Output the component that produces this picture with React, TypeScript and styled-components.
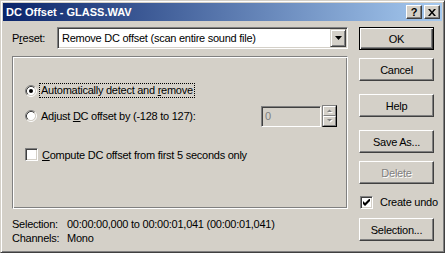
import styled, { createGlobalStyle } from "styled-components";

const FACE = "#d4d0c8";
const SHADOW = "#808080";
const DARK = "#404040";

const GlobalStyle = createGlobalStyle`
  html, body {
    margin: 0;
    padding: 0;
    background: ${FACE};
  }
  body {
    font-family: "Liberation Sans", Arial, sans-serif;
    font-size: 11px;
    letter-spacing: -0.25px;
    color: #000;
  }
`;

function CloseGlyph() {
  return (
    <svg width="8" height="7" viewBox="0 0 8 7">
      <path d="M0 0h2l2 2.5L6 0h2L5 3.5 8 7H6L4 4.5 2 7H0l3-3.5z" fill="#000" />
    </svg>
  );
}

function Radio({ checked }: { checked?: boolean }) {
  return (
    <RadioBox>
      <svg width="12" height="12" viewBox="0 0 12 12">
        <circle cx="6" cy="6" r="4.2" fill="#fff" />
        <path d="M2.11 9.89A5.5 5.5 0 0 1 9.89 2.11" stroke={SHADOW} fill="none" />
        <path d="M9.89 2.11A5.5 5.5 0 0 1 2.11 9.89" stroke="#fff" fill="none" />
        <path d="M2.82 9.18A4.5 4.5 0 0 1 9.18 2.82" stroke={DARK} fill="none" />
        <path d="M9.18 2.82A4.5 4.5 0 0 1 2.82 9.18" stroke={FACE} fill="none" />
        {checked && <circle cx="6" cy="6" r="2" fill="#000" />}
      </svg>
    </RadioBox>
  );
}

function CheckGlyph() {
  return (
    <svg width="7" height="7" viewBox="0 0 7 7">
      <path d="M0 2v3l2 2 5-5V-1L2 4z" fill="#000" />
    </svg>
  );
}

function DownArrow({ disabled }: { disabled?: boolean }) {
  if (disabled) {
    return (
      <svg width="6" height="4" viewBox="0 0 6 4">
        <path d="M1 1h5L3.5 3.5z" fill="#fff" />
        <path d="M0 0h5L2.5 2.5z" fill={SHADOW} />
      </svg>
    );
  }
  return (
    <svg width="7" height="4" viewBox="0 0 7 4">
      <path d="M0 0h7L3.5 4z" fill="#000" />
    </svg>
  );
}

function UpArrow() {
  return (
    <svg width="6" height="4" viewBox="0 0 6 4">
      <path d="M1 4h5L3.5 1.5z" fill="#fff" />
      <path d="M0 3h5L2.5 0.5z" fill={SHADOW} />
    </svg>
  );
}

export default function App() {
  return (
    <>
      <GlobalStyle />
      <Window>
        <TitleBar>
          <Title>DC Offset - GLASS.WAV</Title>
          <CaptionButtons>
            <CaptionButton>?</CaptionButton>
            <CaptionButton>
              <CloseGlyph />
            </CaptionButton>
          </CaptionButtons>
        </TitleBar>

        <Body>
          <LeftColumn>
            <PresetRow>
              <PresetLabel>
                P<U>r</U>eset:
              </PresetLabel>
              <Combo>
                <ComboText>Remove DC offset (scan entire sound file)</ComboText>
                <DropButton>
                  <DownArrow />
                </DropButton>
              </Combo>
            </PresetRow>

            <GroupBox>
              <OptionRow $height={15}>
                <Radio checked />
                <FocusLabel>
                  Automatically detect and <U>r</U>emove
                </FocusLabel>
              </OptionRow>
              <OptionRow $height={22} $gap={7}>
                <Radio />
                <OptionLabel>
                  Adjust <U>D</U>C offset by (-128 to 127):
                </OptionLabel>
                <SpinField>
                  <Edit>0</Edit>
                  <Spin>
                    <SpinButton>
                      <UpArrow />
                    </SpinButton>
                    <SpinButton>
                      <DownArrow disabled />
                    </SpinButton>
                  </Spin>
                </SpinField>
              </OptionRow>
              <OptionRow $height={13} $gap={21}>
                <CheckBox />
                <OptionLabel>
                  <U>C</U>ompute DC offset from first 5 seconds only
                </OptionLabel>
              </OptionRow>
            </GroupBox>

            <InfoGrid>
              <span>Selection:</span>
              <span>00:00:00,000 to 00:00:01,041 (00:00:01,041)</span>
              <span>Channels:</span>
              <span>Mono</span>
            </InfoGrid>
          </LeftColumn>

          <RightColumn>
            <Button $default>OK</Button>
            <Button $gap={8}>Cancel</Button>
            <Button $gap={13}>Help</Button>
            <Button $gap={13}>Save As...</Button>
            <Button $gap={8} $disabled>
              Delete
            </Button>
            <CheckRow>
              <CheckBox>
                <CheckGlyph />
              </CheckBox>
              <span>Create undo</span>
            </CheckRow>
            <Button $gap={9}>Selection...</Button>
          </RightColumn>
        </Body>
      </Window>
    </>
  );
}

const Window = styled.div`
  width: 445px;
  height: 253px;
  box-sizing: border-box;
  background: ${FACE};
  border: 1px solid;
  border-color: ${FACE} ${DARK} ${DARK} ${FACE};
  box-shadow: inset 1px 1px #fff, inset -1px -1px ${SHADOW};
  padding: 2px;
  display: flex;
  flex-direction: column;
`;

const TitleBar = styled.div`
  height: 18px;
  flex: none;
  display: flex;
  align-items: center;
  padding: 0 2px 0 3px;
  background: linear-gradient(90deg, #0a246a 0%, #a6caf0 100%);
`;

const Title = styled.span`
  color: #fff;
  font-weight: 700;
  font-size: 11px;
  letter-spacing: 0;
`;

const CaptionButtons = styled.div`
  margin-left: auto;
  display: flex;
  gap: 2px;
`;

const CaptionButton = styled.div`
  width: 16px;
  height: 14px;
  box-sizing: border-box;
  display: flex;
  align-items: center;
  justify-content: center;
  background: ${FACE};
  border: 1px solid;
  border-color: #fff ${DARK} ${DARK} #fff;
  box-shadow: inset -1px -1px ${SHADOW};
  font-weight: 700;
  font-size: 11px;
  line-height: 1;
  letter-spacing: 0;
`;

const Body = styled.div`
  flex: 1;
  display: flex;
  gap: 11px;
  padding: 6px 8px 0 9px;
`;

const LeftColumn = styled.div`
  width: 336px;
  display: flex;
  flex-direction: column;
`;

const PresetRow = styled.div`
  height: 22px;
  display: flex;
  align-items: center;
`;

const PresetLabel = styled.span`
  width: 45px;
  flex: none;
`;

const U = styled.span`
  text-decoration: underline;
`;

const Combo = styled.div`
  flex: 1;
  height: 22px;
  box-sizing: border-box;
  display: flex;
  align-items: center;
  background: #fff;
  border: 1px solid;
  border-color: ${SHADOW} #fff #fff ${SHADOW};
  box-shadow: inset 1px 1px ${DARK}, inset -1px -1px ${FACE};
  padding: 1px;
`;

const ComboText = styled.span`
  flex: 1;
  padding-left: 3px;
`;

const DropButton = styled.div`
  width: 16px;
  height: 18px;
  box-sizing: border-box;
  display: flex;
  align-items: center;
  justify-content: center;
  background: ${FACE};
  border: 1px solid;
  border-color: ${FACE} ${DARK} ${DARK} ${FACE};
  box-shadow: inset 1px 1px #fff, inset -1px -1px ${SHADOW};
`;

const GroupBox = styled.div`
  margin-top: 7px;
  height: 153px;
  box-sizing: border-box;
  border: 1px solid;
  border-color: ${SHADOW} #fff #fff ${SHADOW};
  box-shadow: inset 1px 1px #fff, inset -1px -1px ${SHADOW};
  padding: 26px 10px 0 12px;
  display: flex;
  flex-direction: column;
`;

const OptionRow = styled.div<{ $height: number; $gap?: number }>`
  height: ${(p) => p.$height}px;
  margin-top: ${(p) => p.$gap ?? 0}px;
  display: flex;
  align-items: center;
`;

const RadioBox = styled.span`
  width: 12px;
  height: 12px;
  display: flex;
  margin-right: 3px;
`;

const OptionLabel = styled.span`
  padding: 0 1px;
`;

const FocusLabel = styled.span`
  padding: 0 1px;
  line-height: 13px;
  outline: 1px dotted #000;
`;

const SpinField = styled.div`
  margin-left: auto;
  display: flex;
  align-items: center;
  gap: 1px;
`;

const Edit = styled.div`
  width: 60px;
  height: 21px;
  box-sizing: border-box;
  display: flex;
  align-items: center;
  padding-left: 3px;
  color: ${SHADOW};
  background: ${FACE};
  border: 1px solid;
  border-color: ${SHADOW} #fff #fff ${SHADOW};
  box-shadow: inset 1px 1px ${DARK}, inset -1px -1px ${FACE};
`;

const Spin = styled.div`
  display: flex;
  flex-direction: column;
  border: 1px solid #000;
  border-left-color: ${SHADOW};
  border-top-color: ${SHADOW};
`;

const SpinButton = styled.div`
  width: 13px;
  height: 10px;
  box-sizing: border-box;
  display: flex;
  align-items: center;
  justify-content: center;
  background: ${FACE};
  border: 1px solid;
  border-color: #fff ${SHADOW} ${SHADOW} #fff;
`;

const CheckBox = styled.span`
  width: 13px;
  height: 13px;
  flex: none;
  box-sizing: border-box;
  display: flex;
  align-items: center;
  justify-content: center;
  margin-right: 3px;
  background: #fff;
  border: 1px solid;
  border-color: ${SHADOW} #fff #fff ${SHADOW};
  box-shadow: inset 1px 1px ${DARK}, inset -1px -1px ${FACE};
`;

const InfoGrid = styled.div`
  margin-top: 8px;
  display: grid;
  grid-template-columns: 55px auto;
  grid-auto-rows: 14px;
  align-items: center;
`;

const RightColumn = styled.div`
  width: 75px;
  display: flex;
  flex-direction: column;
`;

const Button = styled.div<{ $gap?: number; $default?: boolean; $disabled?: boolean }>`
  width: 75px;
  height: 23px;
  margin-top: ${(p) => p.$gap ?? 0}px;
  box-sizing: border-box;
  display: flex;
  align-items: center;
  justify-content: center;
  background: ${FACE};
  border: 1px solid;
  border-color: ${(p) => (p.$default ? "#000" : `#fff ${DARK} ${DARK} #fff`)};
  box-shadow: ${(p) =>
    p.$default
      ? `inset 1px 1px #fff, inset -1px -1px ${DARK}, inset -2px -2px ${SHADOW}`
      : `inset -1px -1px ${SHADOW}`};
  color: ${(p) => (p.$disabled ? SHADOW : "#000")};
  text-shadow: ${(p) => (p.$disabled ? "1px 1px 0 #fff" : "none")};
`;

const CheckRow = styled.div`
  margin-top: 11px;
  height: 14px;
  display: flex;
  align-items: center;
  padding-left: 1px;
  white-space: nowrap;
  gap: 4px;
`;
